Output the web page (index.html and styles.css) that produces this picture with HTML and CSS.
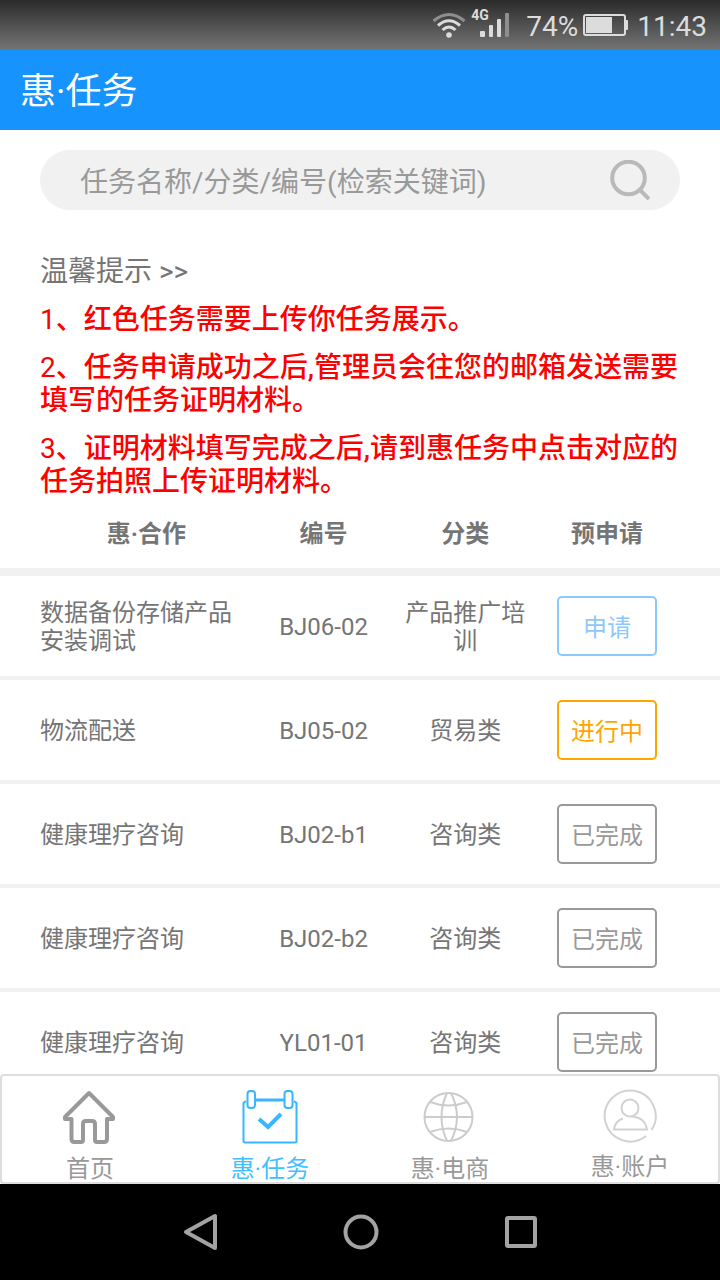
FILE: index.html
```html
<!DOCTYPE html>
<html lang="zh-CN">
<head>
    <meta charset="UTF-8">
    <meta name="viewport" content="width=device-width, initial-scale=1.0">
    <title>惠·任务</title>
    <link rel="stylesheet" href="styles.css">
</head>
<body>
    <div class="status-bar">
        <svg class="wifi" width="34" height="26" viewBox="0 0 34 26" fill="none" stroke="#dcdcdc" stroke-width="3">
            <path d="M1.500 9 Q17 -4 32.500 9" stroke="#8e8e8e"/>
            <path d="M6 13.500 Q17 4 28 13.500"/>
            <path d="M10.500 18 Q17 12 23.500 18"/>
            <circle cx="17" cy="23" r="2.800" fill="#dcdcdc" stroke="none"/>
        </svg>
        <div class="signal">
            <span class="network">4G</span>
            <svg width="30" height="24" viewBox="0 0 30 24" fill="#dcdcdc">
                <rect x="0" y="18" width="5" height="6" rx="1"/>
                <rect x="9" y="12" width="4" height="12" rx="1"/>
                <rect x="17" y="6" width="4" height="18" rx="1"/>
                <rect x="25" y="0" width="4" height="24" rx="1" fill="#8e8e8e"/>
            </svg>
        </div>
        <span class="percent">74%</span>
        <svg class="battery" width="45" height="22" viewBox="0 0 45 22">
            <rect x="1" y="1" width="41" height="20" rx="2" fill="none" stroke="#dcdcdc" stroke-width="2"/>
            <rect x="3" y="3" width="26" height="16" fill="#dcdcdc"/>
            <rect x="42" y="6" width="3" height="10" rx="1" fill="#dcdcdc"/>
        </svg>
        <span class="clock">11:43</span>
    </div>

    <header class="title-bar">
        <h1>惠·任务</h1>
    </header>

    <main class="content">
        <form class="search">
            <input type="text" name="keyword" aria-label="检索关键词" placeholder="任务名称/分类/编号(检索关键词)">
            <button type="submit" aria-label="搜索">
                <svg width="40" height="40" viewBox="0 0 40 40" fill="none" stroke="#b9b9b9" stroke-width="4">
                    <circle cx="18.500" cy="18" r="16.300"/>
                    <path d="M29.500 29.500 L39 39"/>
                </svg>
            </button>
        </form>

        <section class="tips">
            <p>温馨提示 &gt;&gt;</p>
            <p class="warn"><span class="num">1</span>、红色任务需要上传你任务展示。</p>
            <p class="warn"><span class="num">2</span>、任务申请成功之后,管理员会往您的邮箱发送需要填写的任务证明材料。</p>
            <p class="warn"><span class="num">3</span>、证明材料填写完成之后,请到惠任务中点击对应的任务拍照上传证明材料。</p>
        </section>

        <table class="tasks">
            <thead>
                <tr>
                    <th>惠·合作</th>
                    <th>编号</th>
                    <th>分类</th>
                    <th>预申请</th>
                </tr>
            </thead>
            <tbody>
                <tr>
                    <td class="name">数据备份存储产品安装调试</td>
                    <td>BJ06-02</td>
                    <td>产品推广培训</td>
                    <td class="action"><button type="button" class="apply">申请</button></td>
                </tr>
                <tr>
                    <td class="name">物流配送</td>
                    <td>BJ05-02</td>
                    <td>贸易类</td>
                    <td class="action"><button type="button" class="doing">进行中</button></td>
                </tr>
                <tr>
                    <td class="name">健康理疗咨询</td>
                    <td>BJ02-b1</td>
                    <td>咨询类</td>
                    <td class="action"><button type="button" class="done">已完成</button></td>
                </tr>
                <tr>
                    <td class="name">健康理疗咨询</td>
                    <td>BJ02-b2</td>
                    <td>咨询类</td>
                    <td class="action"><button type="button" class="done">已完成</button></td>
                </tr>
                <tr>
                    <td class="name">健康理疗咨询</td>
                    <td>YL01-01</td>
                    <td>咨询类</td>
                    <td class="action"><button type="button" class="done">已完成</button></td>
                </tr>
            </tbody>
        </table>
    </main>

    <nav class="tab-bar">
        <a href="#home">
            <svg width="56" height="56" viewBox="0 0 56 56" fill="none" stroke="#999" stroke-width="4" stroke-linejoin="round">
                <path d="M27 4 L3 28 V30 H9.500 V50 Q9.500 53 12.500 53 H19 Q21 53 21 51 V35 Q21 32 24 32 H30 Q33 32 33 35 V51 Q33 53 35 53 H42 Q45 53 45 50 V30 H51 V28 Z"/>
            </svg>
            <span>首页</span>
        </a>
        <a href="#tasks" class="active">
            <svg width="56" height="56" viewBox="0 0 56 56" fill="none" stroke="#38b6ff" stroke-width="2">
                <path d="M4 12 L1.500 14 V52 Q1.500 53.500 3 53.500 H53 Q54.500 53.500 54.500 52 V14 L52 12"/>
                <path d="M13 11 H42" stroke-width="3"/>
                <rect x="5.500" y="2" width="7.500" height="17" rx="3"/>
                <rect x="42.500" y="2" width="8" height="17" rx="3"/>
                <path d="M17 30 L26 38 L39 25" stroke-width="4"/>
            </svg>
            <span>惠·任务</span>
        </a>
        <a href="#shop">
            <svg width="56" height="56" viewBox="0 0 56 56" fill="none" stroke="#ccc" stroke-width="2">
                <circle cx="26.500" cy="28" r="24"/>
                <path d="M3 28 H50"/>
                <path d="M25 4 Q14 28 25 52"/>
                <path d="M29 4 Q41 28 29 52"/>
                <path d="M8 13 Q26.500 20 45 13"/>
                <path d="M8 43 Q26.500 36 45 43"/>
            </svg>
            <span>惠·电商</span>
        </a>
        <a href="#account" class="account">
            <svg width="56" height="56" viewBox="0 0 56 56" fill="none" stroke="#d2d2d2" stroke-width="2">
                <path d="M49.500 41 A25.500 25.500 0 1 0 44 47"/>
                <circle cx="28" cy="19" r="8.500"/>
                <path d="M21 29.500 Q13 32 12 40.500 H45 Q43 28 29 27.500"/>
            </svg>
            <span>惠·账户</span>
        </a>
    </nav>

    <div class="nav-keys">
        <button type="button" aria-label="返回">
            <svg width="40" height="40" viewBox="0 0 40 40" fill="none" stroke="#a3a3a3" stroke-width="4" stroke-linejoin="round">
                <path d="M35 4 V36 L6 20 Z"/>
            </svg>
        </button>
        <button type="button" aria-label="主页">
            <svg width="40" height="40" viewBox="0 0 40 40" fill="none" stroke="#a3a3a3" stroke-width="4">
                <circle cx="21" cy="20" r="15.500"/>
            </svg>
        </button>
        <button type="button" aria-label="最近任务">
            <svg width="40" height="40" viewBox="0 0 40 40" fill="none" stroke="#a3a3a3" stroke-width="4">
                <rect x="7" y="6" width="28" height="28" rx="1"/>
            </svg>
        </button>
    </div>
</body>
</html>
```

FILE: styles.css
```css
* {
    box-sizing: border-box;
}

body {
    display: flex;
    flex-direction: column;
    height: 100vh;
    margin: 0;
    font-family: Roboto, "Noto Sans CJK SC", sans-serif;
    font-size: 24px;
    color: #757575;
    background-color: #fff;
}

button,
input {
    padding: 0;
    border: none;
    background: none;
    font-family: inherit;
}

svg {
    display: block;
    flex: none;
}

.status-bar {
    display: flex;
    flex: none;
    align-items: center;
    justify-content: flex-end;
    height: 50px;
    padding-right: 13px;
    font-size: 28px;
    line-height: 46px;
    color: #dcdcdc;
    background: linear-gradient(#2b2b2b, #757575);
}

.percent,
.clock {
    padding-top: 4px;
}

.signal {
    position: relative;
    margin: 0 16px 0 14px;
}

.network {
    position: absolute;
    top: -6px;
    left: -9px;
    font-size: 14px;
    font-weight: bold;
    line-height: 16px;
}

.battery {
    margin: 0 9px 0 5px;
}

.title-bar {
    flex: none;
    padding: 4px 20px 0;
    background-color: #1793fd;
}

.title-bar h1 {
    margin: 0;
    font-size: 36px;
    font-weight: normal;
    line-height: 76px;
    color: #fff;
}

.content {
    flex: 1;
    min-height: 0;
    padding-top: 20px;
    overflow: hidden;
}

.search {
    display: flex;
    align-items: center;
    height: 60px;
    margin: 0 40px;
    padding: 0 30px 0 40px;
    border-radius: 30px;
    background-color: #f1f1f1;
}

.search input {
    flex: 1;
    min-width: 0;
    height: 60px;
    padding-top: 4px;
    font-size: 28px;
    outline: none;
}

.search input::placeholder {
    color: #999;
}

.tips {
    padding: 45px 40px 0;
    font-size: 28px;
    line-height: 33px;
}

.tips p {
    margin: 0 0 15px;
}

.tips p:last-child {
    margin-bottom: 0;
}

.tips .warn {
    font-weight: 500;
    color: #f00;
}

.tips .num {
    font-weight: normal;
}

.tasks,
.tasks thead,
.tasks tbody {
    display: block;
}

.tasks tr {
    display: grid;
    grid-template-columns: 3fr 2fr 2fr 2fr;
    align-items: center;
    height: 104px;
    padding: 0 42px 0 40px;
    border-bottom: 4px solid #f1f1f1;
}

.tasks thead tr {
    height: 78px;
    border-bottom-width: 8px;
}

.tasks th,
.tasks td {
    padding: 2px 10px 0;
    line-height: 28px;
    text-align: center;
}

.tasks .name {
    padding-left: 0;
    text-align: left;
}

.tasks .action {
    padding-top: 0;
}

.tasks button {
    width: 100px;
    height: 60px;
    padding-bottom: 2px;
    border: 2px solid #999;
    border-radius: 5px;
    font-size: 24px;
    color: #999;
}

.tasks .apply {
    border-color: #8cc8fc;
    color: #8cc8fc;
}

.tasks .doing {
    border-color: #ffa500;
    color: #ffa500;
}

.tab-bar {
    display: flex;
    flex: none;
    height: 110px;
    border-radius: 4px;
    background-color: #fff;
    box-shadow: inset 0 0 0 2px #ddd;
}

.tab-bar a {
    display: flex;
    flex: 1;
    flex-direction: column;
    align-items: center;
    padding-top: 15px;
    line-height: 28px;
    color: #999;
    text-decoration: none;
}

.tab-bar span {
    margin-top: 10px;
}

.tab-bar .active {
    color: #3fc0ff;
}

.tab-bar .account span {
    margin-top: 8px;
}

.nav-keys {
    display: flex;
    flex: none;
    align-items: center;
    justify-content: center;
    gap: 120px;
    height: 96px;
    background-color: #000;
}
```
